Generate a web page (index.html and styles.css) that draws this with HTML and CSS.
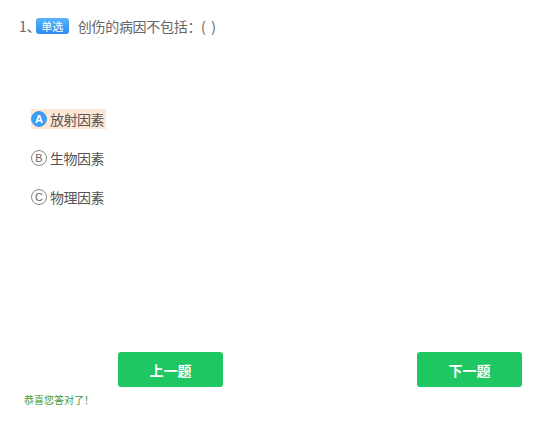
FILE: index.html
```html
<html>
<head>
<title>单选题</title>
<link rel="stylesheet" href="styles.css">
</head>
<body>
<div id="content">
	<div class="question">
		<span class="num">1、</span>
		<span class="badge">单选</span>
		<span class="title">创伤的病因不包括：(&nbsp;&nbsp;)</span>
	</div>

	<div class="options">
		<div class="option"><span class="opt_inner checked"><span class="letter">A</span>放射因素</span></div>
		<div class="option"><span class="opt_inner"><span class="letter">B</span>生物因素</span></div>
		<div class="option"><span class="opt_inner"><span class="letter">C</span>物理因素</span></div>
	</div>

	<div class="buttons">
		<button class="nav_button">上一题</button>
		<button class="nav_button">下一题</button>
	</div>
	<div class="tip">恭喜您答对了！</div>
</div>
</body>
</html>
```

FILE: styles.css
```css
body{
	margin:0;
	font-family:"Noto Sans CJK SC", "Liberation Sans", sans-serif;
	background:#fff;
}
#content{
	width:558px;
	height:432px;
	display:flex;
	flex-direction:column;
}
.question{
	display:flex;
	align-items:center;
	height:20px;
	margin-top:16px;
	padding-left:19px;
	font-size:14px;
	color:#666;
}
.num{
	margin-right:-5px;
}
.badge{
	display:inline-block;
	width:33px;
	height:16px;
	line-height:16px;
	font-size:11px;
	text-align:center;
	color:#fff;
	border-radius:3px;
	background:linear-gradient(to bottom, #59b3ff, #2d8cf0);
	margin-right:9px;
}
.title{
	letter-spacing:-0.3px;
}
.options{
	margin-top:73px;
	padding-left:31px;
	display:flex;
	flex-direction:column;
	gap:19px;
}
.option{
	height:20px;
}
.opt_inner{
	display:inline-flex;
	align-items:center;
	height:20px;
	padding-right:2px;
	font-size:14px;
	letter-spacing:-0.5px;
	color:#555;
}
.opt_inner.checked{
	background-color:#fde7d7;
}
.letter{
	display:inline-block;
	width:14px;
	height:14px;
	line-height:14px;
	border:solid 1px #888;
	border-radius:50%;
	text-align:center;
	font-size:11px;
	letter-spacing:0;
	font-family:"Liberation Sans", sans-serif;
	color:#666;
	margin-right:3px;
}
.checked .letter{
	background-color:#3a9ff5;
	border-color:#3a9ff5;
	color:#fff;
	font-weight:bold;
}
.buttons{
	display:flex;
	justify-content:space-between;
	margin-top:145px;
	padding-left:118px;
	padding-right:36px;
}
.nav_button{
	width:105px;
	height:35px;
	border:none;
	border-radius:3px;
	background-color:#1fc762;
	color:#fff;
	font-family:"Noto Sans CJK SC", sans-serif;
	font-size:14px;
	font-weight:bold;
}
.tip{
	margin-top:5px;
	padding-left:24px;
	font-size:10px;
	color:#3a9a3a;
}
```
